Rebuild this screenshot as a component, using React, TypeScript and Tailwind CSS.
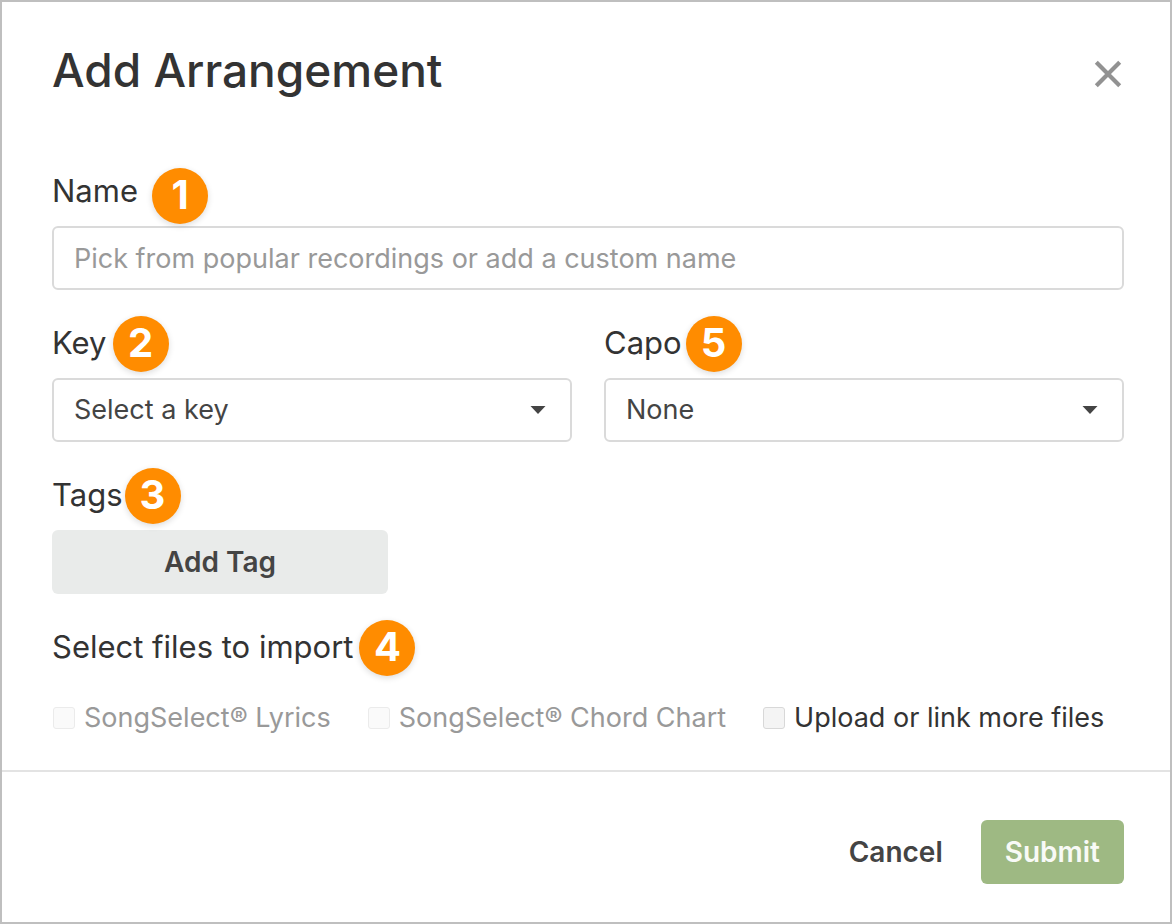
import React from "react";

type BadgeProps = { value: number; place: string };

function Badge({ value, place }: BadgeProps) {
  return (
    <span
      className={`absolute left-full flex size-14 items-center justify-center rounded-full bg-[#ff8c00] pb-0.5 text-[40px] leading-none font-bold text-white shadow-[0_2px_6px_rgba(0,0,0,0.14)] ${place}`}
    >
      {value}
    </span>
  );
}

type PickerProps = {
  id: string;
  label: string;
  option: string;
  badge: number;
  badgePlace: string;
};

function Picker({ id, label, option, badge, badgePlace }: PickerProps) {
  return (
    <div className="flex flex-1 flex-col gap-4">
      <div className="flex">
        <div className="relative">
          <label htmlFor={id} className="block text-[31px] leading-[38px]">
            {label}
          </label>
          <Badge value={badge} place={badgePlace} />
        </div>
      </div>
      <div className="relative">
        <select
          id={id}
          className="block h-16 w-full appearance-none rounded-md border-2 border-[#dadada] bg-white px-5 text-[27px] text-[#444]"
        >
          <option>{option}</option>
        </select>
        <svg
          viewBox="0 0 16 8"
          className="pointer-events-none absolute top-7 right-[26px] h-2 w-4 fill-[#444]"
          aria-hidden="true"
        >
          <path d="M0.5 0h15L8 8z" />
        </svg>
      </div>
    </div>
  );
}

type FileOptionProps = { label: string; disabled?: boolean };

function FileOption({ label, disabled }: FileOptionProps) {
  return (
    <label
      className={`flex items-center gap-2 text-[27px] leading-9 whitespace-nowrap ${disabled ? "text-[#999]" : "text-[#333]"}`}
    >
      <input
        type="checkbox"
        disabled={disabled}
        className="mx-px size-[22px] shrink-0 appearance-none rounded-[3px] border border-[#d8d8d8] bg-[#f4f4f4] disabled:border-[#ebebeb] disabled:bg-[#fafafa]"
      />
      {label}
    </label>
  );
}

export default function App() {
  return (
    <main className="flex min-h-screen flex-col border-2 border-[#bfbfbf] bg-white font-['Inter',sans-serif] text-[#333]">
      <header className="flex items-start justify-between pt-10 pr-12 pl-[50px]">
        <h1 className="pb-1 text-[46px] leading-[56px] font-medium">Add Arrangement</h1>
        <button type="button" aria-label="Close" className="mt-[18px]">
          <svg viewBox="0 0 28 28" className="size-7 stroke-[#929292]" strokeWidth="4.2">
            <path d="M2.3 2.3l23.4 23.4M25.7 2.3L2.3 25.7" />
          </svg>
        </button>
      </header>
      <form className="flex grow flex-col" onSubmit={(e) => e.preventDefault()}>
        <div className="flex flex-col gap-[34px] pt-[70px] pr-[46px] pb-[34px] pl-[50px]">
          <div className="flex flex-col gap-4">
            <div className="flex">
              <div className="relative">
                <label htmlFor="name" className="block text-[31px] leading-[38px]">
                  Name
                </label>
                <Badge value={1} place="-top-1 ml-3.5" />
              </div>
            </div>
            <input
              id="name"
              type="text"
              placeholder="Pick from popular recordings or add a custom name"
              className="h-16 w-full rounded-md border-2 border-[#dadada] px-5 text-[27px] placeholder:text-[#999]"
            />
          </div>
          <div className="flex gap-8">
            <Picker
              id="key"
              label="Key"
              option="Select a key"
              badge={2}
              badgePlace="-top-2 ml-1.5"
            />
            <Picker id="capo" label="Capo" option="None" badge={5} badgePlace="-top-2 ml-1" />
          </div>
          <div className="flex flex-col items-start gap-4">
            <div className="relative text-[31px] leading-[38px]">
              Tags
              <Badge value={3} place="-top-2 ml-0.5" />
            </div>
            <button
              type="button"
              className="h-16 w-[336px] rounded-md bg-[#e9ebea] text-[28px] font-semibold text-[#444]"
            >
              Add Tag
            </button>
          </div>
          <fieldset>
            <legend className="relative text-[31px] leading-[38px]">
              Select files to import
              <Badge value={4} place="-top-2 ml-1.5" />
            </legend>
            <div className="flex flex-wrap gap-x-9 pt-[34px]">
              <FileOption label="SongSelect® Lyrics" disabled />
              <FileOption label="SongSelect® Chord Chart" disabled />
              <FileOption label="Upload or link more files" />
            </div>
          </fieldset>
        </div>
        <footer className="flex items-center justify-end gap-[38px] border-t-2 border-[#e3e3e3] pt-12 pr-[46px] pb-[38px]">
          <button type="button" className="text-[28px] font-semibold text-[#444]">
            Cancel
          </button>
          <button
            type="submit"
            className="h-16 rounded-md bg-[#9eb983] px-6 text-[28px] font-semibold text-[#f8faf6]"
          >
            Submit
          </button>
        </footer>
      </form>
    </main>
  );
}
